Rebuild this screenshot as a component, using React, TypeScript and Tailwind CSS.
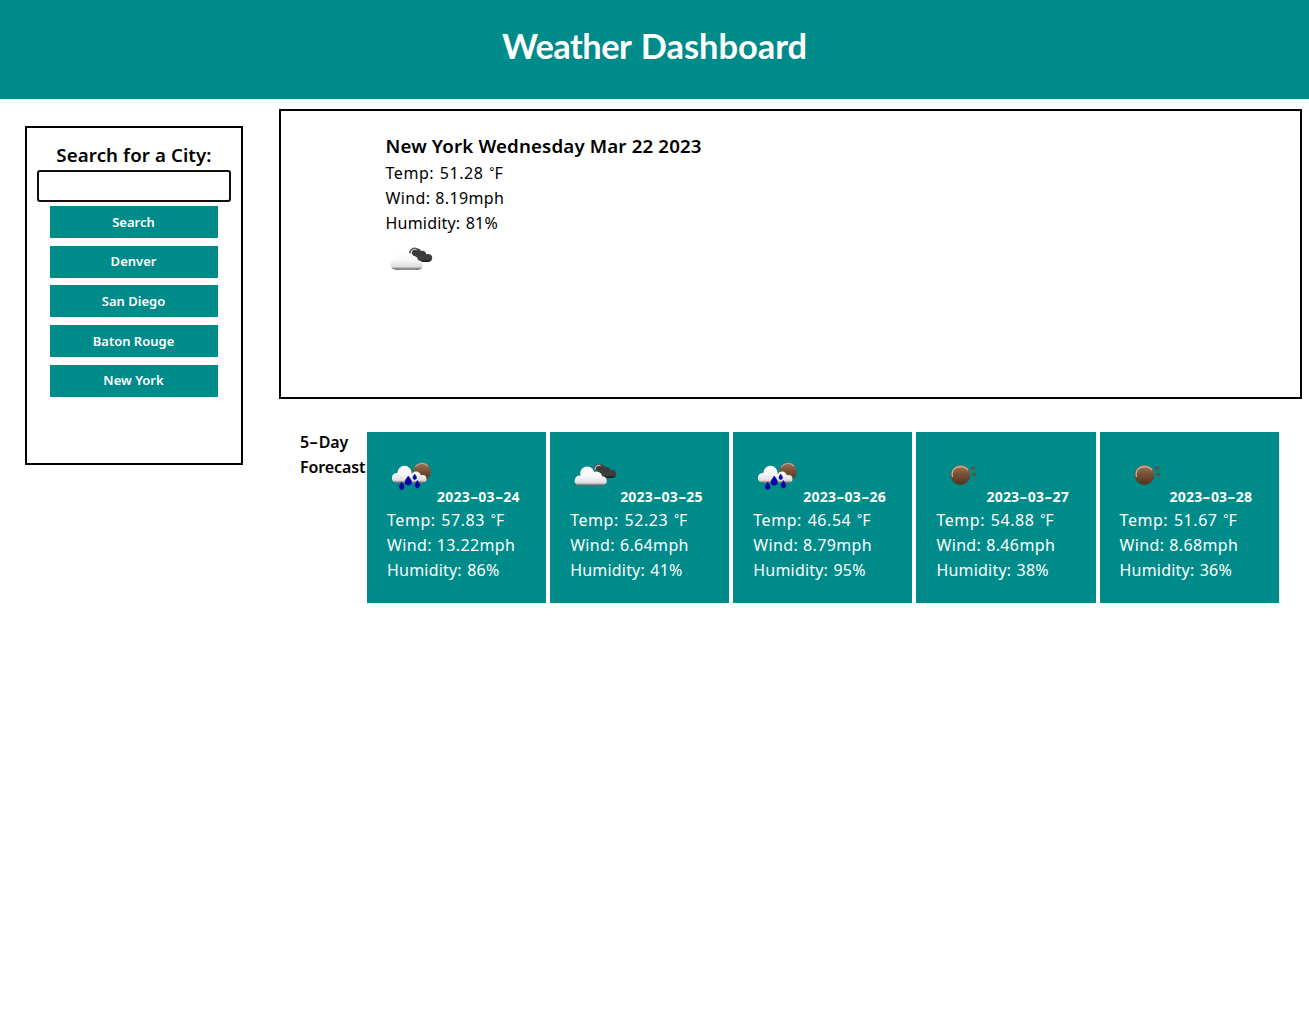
type Sky = "rain" | "clouds" | "clear";

function WeatherIcon({ sky }: { sky: Sky }) {
  return (
    <svg width="50" height="50" viewBox="0 0 50 50" className="block shrink-0">
      <defs>
        <linearGradient id="cloud" gradientUnits="userSpaceOnUse" x1="0" y1="15" x2="0" y2="35">
          <stop offset="0" stopColor="#ffffff" />
          <stop offset="0.5" stopColor="#f9f9f9" />
          <stop offset="0.84" stopColor="#dedede" />
          <stop offset="0.93" stopColor="#888888" />
          <stop offset="1" stopColor="#555555" />
        </linearGradient>
        <linearGradient id="dark" x1="0" y1="0" x2="0" y2="1">
          <stop offset="0" stopColor="#484848" />
          <stop offset="0.3" stopColor="#3a3a3a" />
          <stop offset="0.8" stopColor="#404040" />
          <stop offset="1" stopColor="#161616" />
        </linearGradient>
        <linearGradient id="bronze" x1="0" y1="0" x2="0" y2="1">
          <stop offset="0" stopColor="#a07558" />
          <stop offset="0.45" stopColor="#785237" />
          <stop offset="1" stopColor="#50331f" />
        </linearGradient>
      </defs>
      {sky === "clouds" && (
        <>
          <path d="M26 19c-1-6 7-8 9-3 2.500-1 5 .5 5.200 3.200 4-.8 6.500 1.300 6 4.300-.3 2.200-1.800 3.500-4.300 3.500H31z" fill="url(#dark)" />
          <path d="M24 18.500c0-4 3.500-6 6.500-4.500" fill="none" stroke="#555555" strokeWidth="1.800" />
          <path d="M25 18.500c.3-3.500 3-5 5.500-3.700" fill="none" stroke="#e8e8e8" strokeWidth="1" />
          <g fill="url(#cloud)">
            <circle cx="9.700" cy="29.700" r="5.100" />
            <circle cx="17.200" cy="22.500" r="7" />
            <circle cx="26.500" cy="26.300" r="5.800" />
            <circle cx="32" cy="30" r="4.800" />
            <path d="M9.700 34.800V25h16l6.300 2v7.800z" />
          </g>
        </>
      )}
      {sky === "rain" && (
        <>
          <circle cx="35" cy="20.700" r="8.900" fill="url(#bronze)" />
          <path d="M28 16c3-4 9-5 13-1" fill="none" stroke="#c8a48c" strokeWidth="1.200" />
          <g fill="url(#cloud)" transform="translate(0 -2.500)">
            <circle cx="9.800" cy="29.500" r="5" />
            <circle cx="17.500" cy="24.500" r="7.200" />
            <circle cx="29" cy="28" r="5" />
            <circle cx="35.500" cy="30.500" r="4" />
            <path d="M9.800 34.500V26h19l6.700 2v6.500z" />
          </g>
          <g fill="#0000b0" stroke="#08087a" strokeWidth=".5">
            <path d="M14.700 31c-2 3-2.700 4.200-2.300 5.800.8 2.200 3.900 2.200 4.600 0 .4-1.600-.3-2.800-2.300-5.800zM21.300 25c-2.500 3.500-3.700 5-3.200 7 .9 2.900 5.400 2.900 6.300 0 .6-2-.6-3.500-3.100-7zM27.700 23c-1.500 2.200-2 3.100-1.700 4.300.5 1.600 2.900 1.600 3.500 0 .3-1.200-.3-2.100-1.800-4.300zM30.400 29.500c-2 3-2.700 4.200-2.300 5.800.8 2.200 3.900 2.200 4.600 0 .4-1.600-.3-2.800-2.300-5.800z" />
          </g>
        </>
      )}
      {sky === "clear" && (
        <>
          <circle cx="24.500" cy="24" r="9.900" fill="url(#bronze)" />
          <path d="M16.500 26c-1.500-6.500 2.500-10.300 8-10.300 3.500 0 5.500 1 7.500 3.500" fill="none" stroke="#d8b098" strokeWidth="1.200" />
          <path d="m34.700 15.500 2 .7 2-.7-.7 2 .9 1.500-2.200-.4-1.800.4.6-1.500zM36.700 21.500l1.500.5 1.700-.5-.5 1.700.5 1.500-1.700-.5-1.500.6.3-1.600z" fill="#754527" />
        </>
      )}
    </svg>
  );
}

/** A hyphen stretched to about the width of a figure. */
function Hyphen() {
  return <span className="mx-[0.14em] inline-block scale-x-[1.700] tracking-normal">-</span>;
}

function DateLabel({ date }: { date: string }) {
  const [year, month, day] = date.split("-");
  return (
    <h4 className="mt-[33px] text-[14px] font-bold tracking-[0.220px] whitespace-nowrap">
      {year}<Hyphen />{month}<Hyphen />{day}
    </h4>
  );
}

function Reading({ temp, wind, humidity }: { temp: string; wind: string; humidity: string }) {
  return (
    <>
      <p className="tracking-[0.550px] [word-spacing:1px]">
        Temp: {temp} <span className="align-[3px] text-[12px] leading-none tracking-normal">°</span>F
      </p>
      <p className="tracking-[0.350px] [word-spacing:0.500px]">Wind: {wind}mph</p>
      <p className="tracking-[0.200px] [word-spacing:1px]">Humidity: {humidity}%</p>
    </>
  );
}

const cities = ["Denver", "San Diego", "Baton Rouge", "New York"];

const days: { sky: Sky; date: string; temp: string; wind: string; humidity: string }[] = [
  { sky: "rain", date: "2023-03-24", temp: "57.83", wind: "13.22", humidity: "86" },
  { sky: "clouds", date: "2023-03-25", temp: "52.23", wind: "6.64", humidity: "41" },
  { sky: "rain", date: "2023-03-26", temp: "46.54", wind: "8.79", humidity: "95" },
  { sky: "clear", date: "2023-03-27", temp: "54.88", wind: "8.46", humidity: "38" },
  { sky: "clear", date: "2023-03-28", temp: "51.67", wind: "8.68", humidity: "36" },
];

export default function App() {
  return (
    <div className="min-h-screen bg-white font-['Noto_Sans','Open_Sans',sans-serif] text-base leading-[25px] text-black">
      <header className="flex h-[99px] justify-center bg-[#008b8b] pt-[21px]">
        <h1 className="font-['Lato','Noto_Sans',sans-serif] text-[34.400px] leading-[50px] font-bold text-white [word-spacing:1px]">
          <span className="tracking-[-0.500px]">Weather</span> Dashboard
        </h1>
      </header>
      <main className="flex items-start">
        <aside className="mt-[27px] ml-[25px] flex h-[339px] w-[218px] flex-col items-center border-2 border-black pt-[14px]">
          <h2 className="text-[18.700px] leading-[25px] font-semibold tracking-[0.100px]">Search for a City:</h2>
          <input className="mt-[3px] h-8 w-[194px] rounded-[3px] border-2 border-[#101010] bg-white outline-none" />
          <div className="mt-1 flex flex-col gap-[7.700px]">
            {["Search", ...cities].map((city) => (
              <button key={city} className="h-8 w-[168px] bg-[#008b8b] pr-px text-[13px] font-semibold text-white">{city}</button>
            ))}
          </div>
        </aside>
        <div className="ml-9">
          <section className="mt-[10px] h-[290px] w-[1023px] border-2 border-black pt-[22px] pl-[104.500px]">
            <h2 className="text-[18.700px] font-semibold tracking-[0.150px]">New York Wednesday Mar 22 2023</h2>
            <div className="mt-[3px] -mb-px">
              <Reading temp="51.28" wind="8.19" humidity="81" />
            </div>
            <WeatherIcon sky="clouds" />
          </section>
          <section className="mt-[33px] ml-[21px] flex">
            <h3 className="-mt-[2px] w-[67px] shrink-0 font-semibold tracking-[-0.100px]">
              <span className="block">5<Hyphen />Day</span>
              <span className="block">Forecast</span>
            </h3>
            <div className="flex gap-1">
              {days.map((d) => (
                <article key={d.date} className="h-[171px] w-[179.150px] bg-[#008b8b] pt-[19px] pl-5 text-white">
                  <div className="flex h-[57px] items-start">
                    <WeatherIcon sky={d.sky} />
                    <DateLabel date={d.date} />
                  </div>
                  <Reading temp={d.temp} wind={d.wind} humidity={d.humidity} />
                </article>
              ))}
            </div>
          </section>
        </div>
      </main>
    </div>
  );
}
